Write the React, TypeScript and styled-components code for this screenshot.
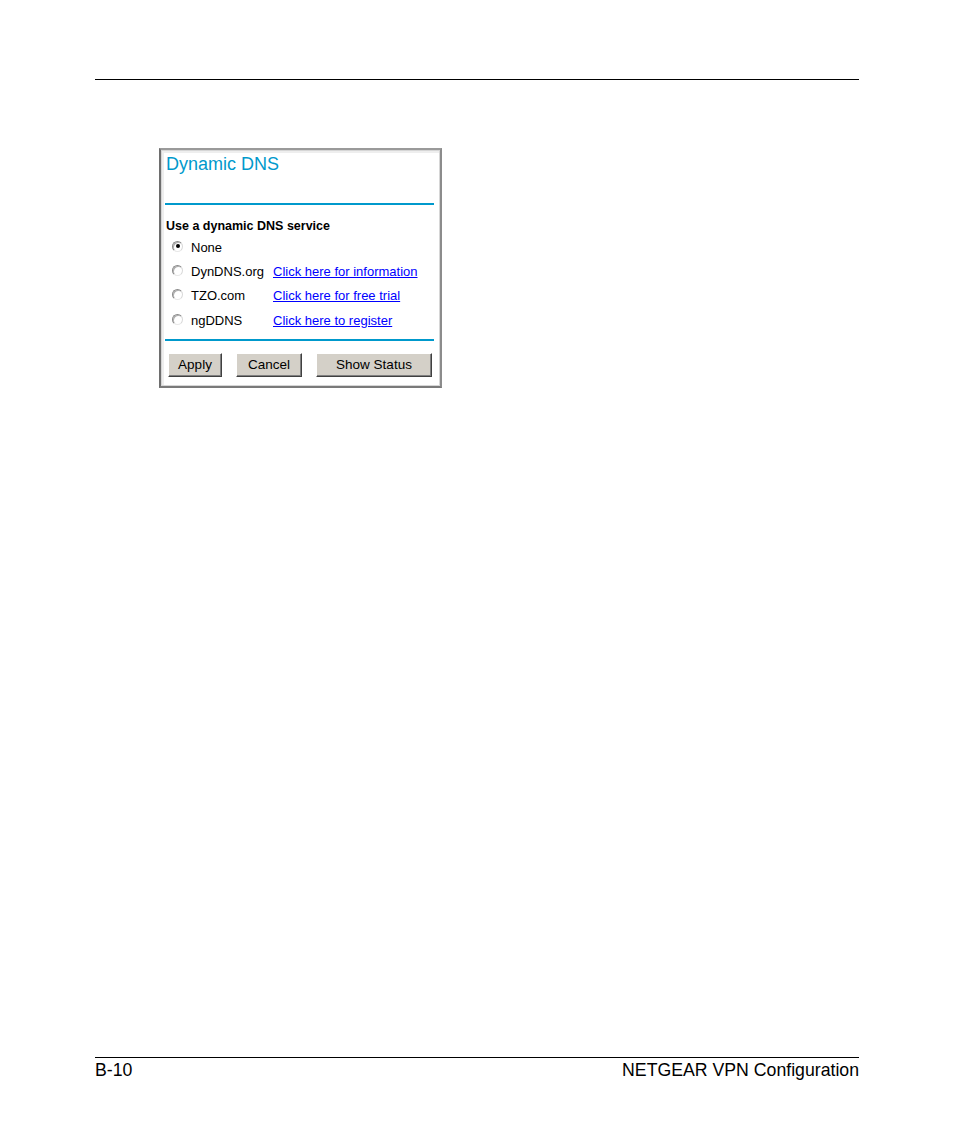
import React from 'react';
import styled, { createGlobalStyle } from 'styled-components';

const GlobalStyle = createGlobalStyle`
    html, body {
        margin: 0;
        padding: 0;
        background: #ffffff;
    }
    body {
        font-family: "Liberation Sans", Arial, sans-serif;
        color: #000000;
    }
`;

const Page = styled.div`
    width: 954px;
    height: 1145px;
    box-sizing: border-box;
    padding: 79px 95px 0;
    display: flex;
    flex-direction: column;
`;

const Rule = styled.div`
    border-top: 1px solid #000000;
`;

const Content = styled.div`
    flex: 1;
    padding: 68px 0 0 64px;
`;

const Panel = styled.div`
    width: 283px;
    height: 240px;
    box-sizing: border-box;
    border: 2px solid;
    border-color: #9a9a9a #8c8c8c #7a7a7a #6e6e6e;
    box-shadow: inset 0 0 0 1px #d6d6d6, inset 1px 1px 0 2px #eeeeee;
    background: #ffffff;
    padding: 1px 6px 0 4px;
    display: flex;
    flex-direction: column;
`;

const Title = styled.div`
    color: #0099cc;
    font-size: 18px;
    line-height: 26px;
    padding-left: 1px;
`;

const BlueLine = styled.div<{ top: number }>`
    height: 2px;
    background: #0099cc;
    margin-top: ${(props) => props.top}px;
`;

const Heading = styled.div`
    font-weight: bold;
    font-size: 12.5px;
    line-height: 18px;
    margin-top: 12px;
    padding-left: 1px;
`;

const Row = styled.div`
    display: flex;
    align-items: center;
    height: 24.3px;
    padding-left: 7px;
    font-size: 13px;
`;

const Radio = styled.span<{ checked?: boolean }>`
    width: 11px;
    height: 11px;
    box-sizing: border-box;
    border-radius: 50%;
    border: 1px solid;
    border-color: #8a8a8a #d8d8d8 #e8e8e8 #8a8a8a;
    box-shadow: inset 1px 1px 0 #b0b0b0;
    background: #ffffff;
    display: flex;
    align-items: center;
    justify-content: center;
    margin-right: 8px;
    margin-top: -2px;

    &::after {
        content: '';
        width: 4px;
        height: 4px;
        border-radius: 50%;
        background: ${(props) => (props.checked ? '#000000' : 'transparent')};
    }
`;

const Label = styled.span`
    width: 82px;
    color: #000000;
`;

const Link = styled.a`
    color: #0000ff;
    text-decoration: underline;
    cursor: pointer;
`;

const ButtonRow = styled.div`
    display: flex;
    gap: 14px;
    margin-top: 12px;
    padding-left: 3px;
`;

const Button = styled.button<{ w: number }>`
    width: ${(props) => props.w}px;
    height: 24px;
    box-sizing: border-box;
    background: #d4d0c8;
    border: 1px solid;
    border-color: #ffffff #404040 #404040 #ffffff;
    box-shadow: inset -1px -1px 0 #808080;
    font-family: "Liberation Sans", Arial, sans-serif;
    font-size: 13.5px;
    color: #000000;
    padding: 0 0 1px;
`;

const Footer = styled.div`
    display: flex;
    justify-content: space-between;
    font-size: 17.7px;
    line-height: 22px;
    padding-top: 1px;
    height: 86px;
`;

const options = [
    { name: 'None', link: '', checked: true },
    { name: 'DynDNS.org', link: 'Click here for information' },
    { name: 'TZO.com', link: 'Click here for free trial' },
    { name: 'ngDDNS', link: 'Click here to register' },
];

const App: React.FC = () => {
    return (
        <Page>
            <GlobalStyle />
            <Rule />
            <Content>
                <Panel>
                    <Title>Dynamic DNS</Title>
                    <BlueLine top={26} />
                    <Heading>Use a dynamic DNS service</Heading>
                    {options.map((o) => (
                        <Row key={o.name}>
                            <Radio checked={o.checked} />
                            <Label>{o.name}</Label>
                            {o.link && <Link>{o.link}</Link>}
                        </Row>
                    ))}
                    <BlueLine top={7} />
                    <ButtonRow>
                        <Button w={54}>Apply</Button>
                        <Button w={66}>Cancel</Button>
                        <Button w={116}>Show Status</Button>
                    </ButtonRow>
                </Panel>
            </Content>
            <Rule />
            <Footer>
                <span>B-10</span>
                <span>NETGEAR VPN Configuration</span>
            </Footer>
        </Page>
    );
};

export default App;
